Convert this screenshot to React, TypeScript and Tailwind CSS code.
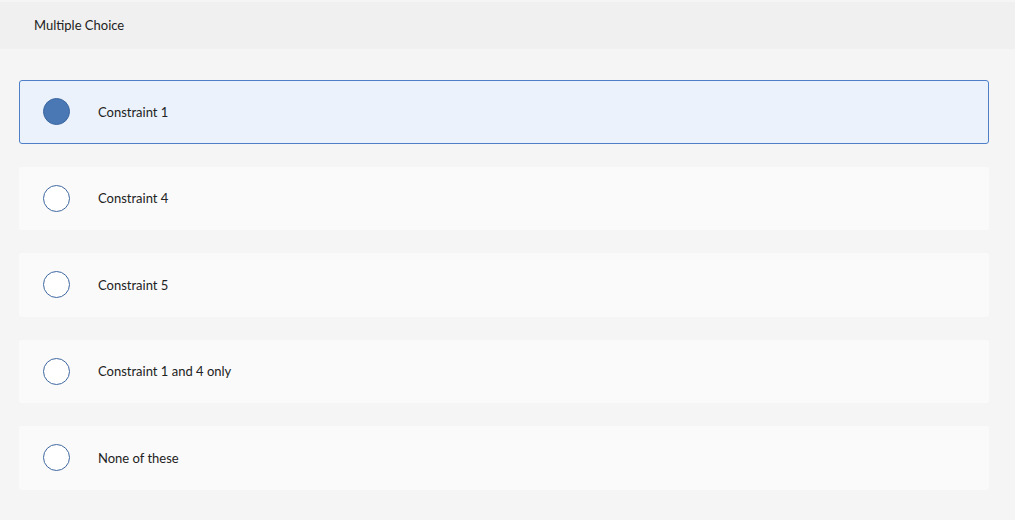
const OPTIONS = [
  { id: "a", label: "Constraint 1" },
  { id: "b", label: "Constraint 4" },
  { id: "c", label: "Constraint 5" },
  { id: "d", label: "Constraint 1 and 4 only" },
  { id: "e", label: "None of these" },
];

export default function App() {
  const selected = "a";

  return (
    <div className="h-[520px] w-[1024px] bg-white" style={{ fontFamily: "Lato, 'Open Sans', sans-serif" }}>
      <div className="flex h-[520px] w-[1015px] flex-col bg-[#f5f5f5]">
        <header className="mt-[2px] flex h-[47px] shrink-0 items-center bg-[#f0f0f0] pl-[34px]">
          <span className="pt-[1px] text-[13px] text-[#222]">Multiple Choice</span>
        </header>
        <div className="flex flex-col gap-[23px] pl-[19px] pr-[26px] pt-[31px]">
          {OPTIONS.map((opt) => {
            const isSel = opt.id === selected;
            return (
              <div
                key={opt.id}
                className={
                  isSel
                    ? "flex h-[63.5px] items-center rounded-[3px] border border-[#4f7fc6] bg-[#ebf2fb]"
                    : "flex h-[63.5px] items-center rounded-[3px] border border-transparent bg-[#fafafa]"
                }
              >
                <div className="ml-[22px] flex w-[28px] justify-center">
                  <span
                    className={
                      isSel
                        ? "block h-[27px] w-[27px] rounded-full border border-[#3a669f] bg-[#4a78b5]"
                        : "block h-[27px] w-[27px] rounded-full border-[1.5px] border-[#3f68a0] bg-white"
                    }
                  />
                </div>
                <span className="ml-[28px] pt-[1px] text-[13px] text-[#222]">{opt.label}</span>
              </div>
            );
          })}
        </div>
      </div>
    </div>
  );
}
